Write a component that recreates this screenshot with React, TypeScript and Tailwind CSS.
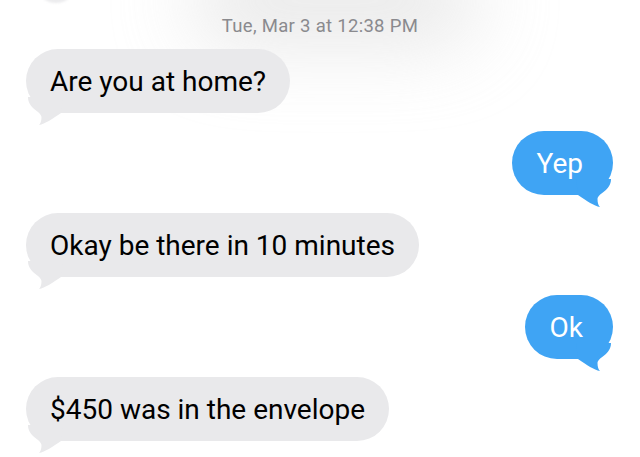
const messages = [
  { id: 1, from: 'them', text: 'Are you at home?' },
  { id: 2, from: 'me', text: 'Yep' },
  { id: 3, from: 'them', text: 'Okay be there in 10 minutes' },
  { id: 4, from: 'me', text: 'Ok' },
  { id: 5, from: 'them', text: '$450 was in the envelope' },
];

function Tail({ side, color }: { side: 'left' | 'right'; color: string }) {
  // drawn for the right side, mirrored for the left one
  return (
    <svg
      width="40"
      height="30"
      viewBox="-38 -16 40 30"
      className={
        side === 'right'
          ? 'absolute right-[-1px] bottom-[-14px]'
          : 'absolute left-[-1px] bottom-[-14px] -scale-x-100'
      }
    >
      <path
        d="M -36 -16 L -1 -16 C -1 -4 -14 -2 -14.5 4 C -14.5 8 -13.5 10.5 -12 12 C -18 11 -25 6 -34 0 Z"
        fill={color}
      />
    </svg>
  );
}

function Bubble({ from, text }: { from: string; text: string }) {
  const mine = from === 'me';
  const color = mine ? '#3fa4f4' : '#e9e9eb';
  return (
    <div className={mine ? 'flex justify-end' : 'flex justify-start'}>
      <div
        className={
          mine
            ? 'relative h-[64px] flex items-center rounded-[32px] bg-[#3fa4f4] pl-[25px] pr-[30px] pt-[2px] text-white'
            : 'relative h-[64px] flex items-center rounded-[32px] bg-[#e9e9eb] px-[24px] pt-[2px] text-black'
        }
      >
        <Tail side={mine ? 'right' : 'left'} color={color} />
        <span className="relative text-[28px] leading-none whitespace-nowrap">{text}</span>
      </div>
    </div>
  );
}

export default function App() {
  return (
    <div
      className="relative w-[640px] h-[457px] overflow-hidden bg-white"
      style={{ fontFamily: 'Roboto, "Noto Sans", sans-serif' }}
    >
      {/* soft shadow at the top and the edge of an earlier bubble */}
      <div className="absolute left-[190px] top-[-45px] w-[290px] h-[90px] rounded-full bg-[#d9d9d9] blur-2xl opacity-60" />
      <div className="absolute left-[36px] top-[-60px] w-[40px] h-[63px] rounded-[32px] bg-[#ececee] blur-[1px]" />

      <div className="relative pt-[16px]">
        <p className="text-center text-[18.5px] leading-[20px] tracking-[0.3px] text-[#8a8a8e]">
          Tue, Mar 3 at 12:38 PM
        </p>

        <div className="mt-[13px] flex flex-col gap-[18px] pl-[26px] pr-[27px]">
          {messages.map((m) => (
            <Bubble key={m.id} from={m.from} text={m.text} />
          ))}
        </div>
      </div>
    </div>
  );
}
